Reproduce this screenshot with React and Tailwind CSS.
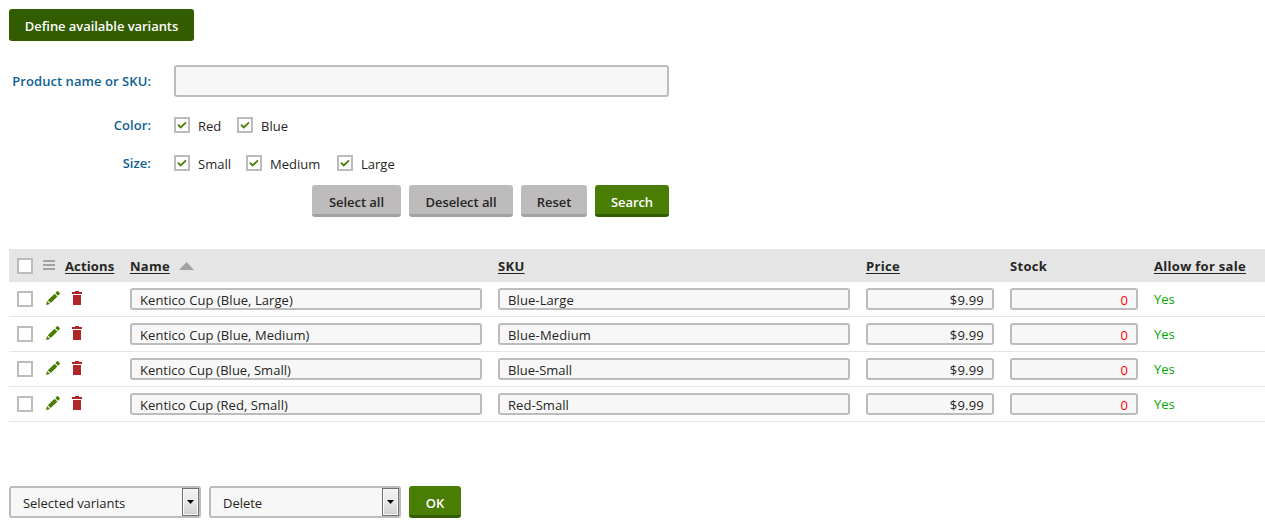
const rows = [
  ['Kentico Cup (Blue, Large)', 'Blue-Large', 'tracking-[0.07px]', 'tracking-[0.1px]'],
  ['Kentico Cup (Blue, Medium)', 'Blue-Medium', 'tracking-[0.07px]', 'tracking-[0.15px]'],
  ['Kentico Cup (Blue, Small)', 'Blue-Small', 'tracking-[0.02px]', 'tracking-[0px]'],
  ['Kentico Cup (Red, Small)', 'Red-Small', 'tracking-[0.05px]', 'tracking-[0.05px]'],
];

function Box({ checked, className = '' }) {
  return (
    <span className={`block h-4 w-4 shrink-0 border-2 border-[#bdbbbb] bg-white ${className}`}>
      {checked && (
        <svg className="block" width="12" height="12" viewBox="0 0 12 12">
          <path d="M2 5.7 L4.7 8.4 L10 3.4" fill="none" stroke="#497d04" strokeWidth="1.8" />
        </svg>
      )}
    </span>
  );
}

function Option({ label, width }) {
  return (
    <div className={`flex items-start ${width}`}>
      <Box checked />
      <span className="ml-2 leading-[18px]">{label}</span>
    </div>
  );
}

function Button({ label, width, tone }) {
  return (
    <button className={`flex h-8 shrink-0 items-center justify-center rounded-[3px] border-b-[3px] pt-1.5 text-[13px] font-semibold tracking-[-0.06px] whitespace-nowrap ${width} ${tone}`}>
      {label}
    </button>
  );
}

const GRAY = 'bg-[#bdbbbb] border-[#a3a2a2] text-[#262524]';
const GREEN = 'bg-[#497d04] border-[#325c00] text-white';
const DARK = 'bg-[#325c00] border-[#325c00] text-white';

function Field({ children, className = '' }) {
  return (
    <div className={`flex h-[22px] items-center rounded-[3px] border-2 border-[#bdbbbb] bg-[#f7f7f7] px-2 pt-[3px] whitespace-nowrap ${className}`}>
      {children}
    </div>
  );
}

function Pencil() {
  return (
    <svg className="block" width="14" height="14" viewBox="0 0 14 14" fill="#497d04">
      <path d="M0 14 L1.1 9.9 L4 12.9 Z" />
      <path d="M1.8 9.2 L8.6 2.7 L11.4 5.4 L4.7 12.1 Z" />
      <path d="M9.3 2 L11 0.3 Q11.5 -0.1 12 0.3 L13.7 2 Q14.1 2.5 13.7 3 L12.1 4.7 Z" />
    </svg>
  );
}

function Trash() {
  return (
    <svg className="block" width="10" height="14" viewBox="0 0 10 14" fill="#b12628" shapeRendering="crispEdges">
      <path d="M0 1 H3 V0 H7 V1 H10 V3 H0 Z M1 4 H9 V14 H1 Z" />
    </svg>
  );
}

function Select({ label }) {
  return (
    <div className="flex h-8 w-48 justify-between rounded-[3px] border-2 border-[#bdbbbb] bg-[#f7f7f7] pl-3">
      <span className="pt-1.5 leading-[18px] tracking-[-0.04px]">{label}</span>
      <span className="flex h-7 w-[17px] items-center justify-center border border-[#707070] bg-linear-to-b from-[#f2f2f2] via-[#e8e8e8] to-[#cfcfcf] shadow-[inset_0_0_0_1px_#fafafa]">
        <svg width="7" height="4" viewBox="0 0 7 4"><path d="M0 0 H7 L3.5 4 Z" fill="#000" /></svg>
      </span>
    </div>
  );
}

const GRID = 'grid grid-cols-[121px_368px_368px_144px_144px_1fr]';
const HEAD = 'underline underline-offset-2 decoration-1';
const LABEL = 'w-[142px] shrink-0 text-right font-semibold tracking-[0.06px] text-[#0f6194] leading-[18px]';

export default function App() {
  return (
    <div className="h-[529px] w-[1265px] overflow-hidden bg-white pt-[9px] pl-[9px] font-['Open_Sans','Noto_Sans',sans-serif] text-[13px] text-[#262524]">
      <Button label="Define available variants" width="w-[185px]" tone={DARK} />
      <div className="mt-6 flex h-8">
        <div className={`${LABEL} pt-[7px]`}>Product name or SKU:</div>
        <div className="ml-[23px] h-8 w-[495px] rounded-[3px] border-2 border-[#bdbbbb] bg-[#f7f7f7]" />
      </div>
      <div className="mt-5 flex h-[18px]">
        <div className={`${LABEL} -mt-px`}>Color:</div>
        <div className="ml-[23px] flex">
          <Option label="Red" width="w-[63px]" />
          <Option label="Blue" width="w-[63px]" />
        </div>
      </div>
      <div className="mt-5 flex h-[18px]">
        <div className={`${LABEL} -mt-px`}>Size:</div>
        <div className="ml-[23px] flex">
          <Option label="Small" width="w-[72px]" />
          <Option label="Medium" width="w-[91px]" />
          <Option label="Large" width="w-[72px]" />
        </div>
      </div>
      <div className="mt-3 flex w-[660px] justify-end gap-2">
        <Button label="Select all" width="w-[89px]" tone={GRAY} />
        <Button label="Deselect all" width="w-[104px]" tone={GRAY} />
        <Button label="Reset" width="w-[66px]" tone={GRAY} />
        <Button label="Search" width="w-[74px]" tone={GREEN} />
      </div>

      <div className={`${GRID} mt-8 h-[33px] items-center bg-[#e5e5e5] pt-0.5 font-bold whitespace-nowrap`}>
        <div className="flex items-center pl-2">
          <Box className="-mt-0.5" />
          <svg className="-mt-1 ml-2.5 block" width="12" height="10" viewBox="0 0 12 10" fill="#a3a2a2">
            <path d="M0 0 H12 V2 H0 Z M0 4 H12 V6 H0 Z M0 8 H12 V10 H0 Z" />
          </svg>
          <span className={`ml-2.5 tracking-[0.15px] ${HEAD}`}>Actions</span>
        </div>
        <div className="flex items-center">
          <span className={`tracking-[0.25px] ${HEAD}`}>Name</span>
          <svg className="-mt-px ml-[9px] block" width="15" height="8" viewBox="0 0 15 8"><path d="M0 8 L7.5 0 L15 8 Z" fill="#a3a2a2" /></svg>
        </div>
        <div className={`tracking-[0.3px] ${HEAD}`}>SKU</div>
        <div className={`tracking-[0.3px] ${HEAD}`}>Price</div>
        <div className="tracking-[0.3px]">Stock</div>
        <div className={`tracking-[0.3px] ${HEAD}`}>Allow for sale</div>
      </div>
      {rows.map(([name, sku, nameTrack, skuTrack]) => (
        <div key={name} className={`${GRID} h-[35px] border-b border-[#e5e5e5] pt-1.5`}>
          <div className="flex items-start pl-2">
            <Box className="mt-[3px]" />
            <div className="mt-[3px] ml-[13px]"><Pencil /></div>
            <div className="mt-[3px] ml-3"><Trash /></div>
          </div>
          <Field className={`w-[352px] ${nameTrack}`}>{name}</Field>
          <Field className={`w-[352px] ${skuTrack}`}>{sku}</Field>
          <Field className="w-32 justify-end tracking-[0.2px]">$9.99</Field>
          <Field className="w-32 justify-end text-[#ff0000]">0</Field>
          <div className="pt-0.5 leading-[18px] text-[#00a800]">Yes</div>
        </div>
      ))}

      <div className="mt-16 flex gap-2">
        <Select label="Selected variants" />
        <Select label="Delete" />
        <Button label="OK" width="w-[52px]" tone={GREEN} />
      </div>
    </div>
  );
}
